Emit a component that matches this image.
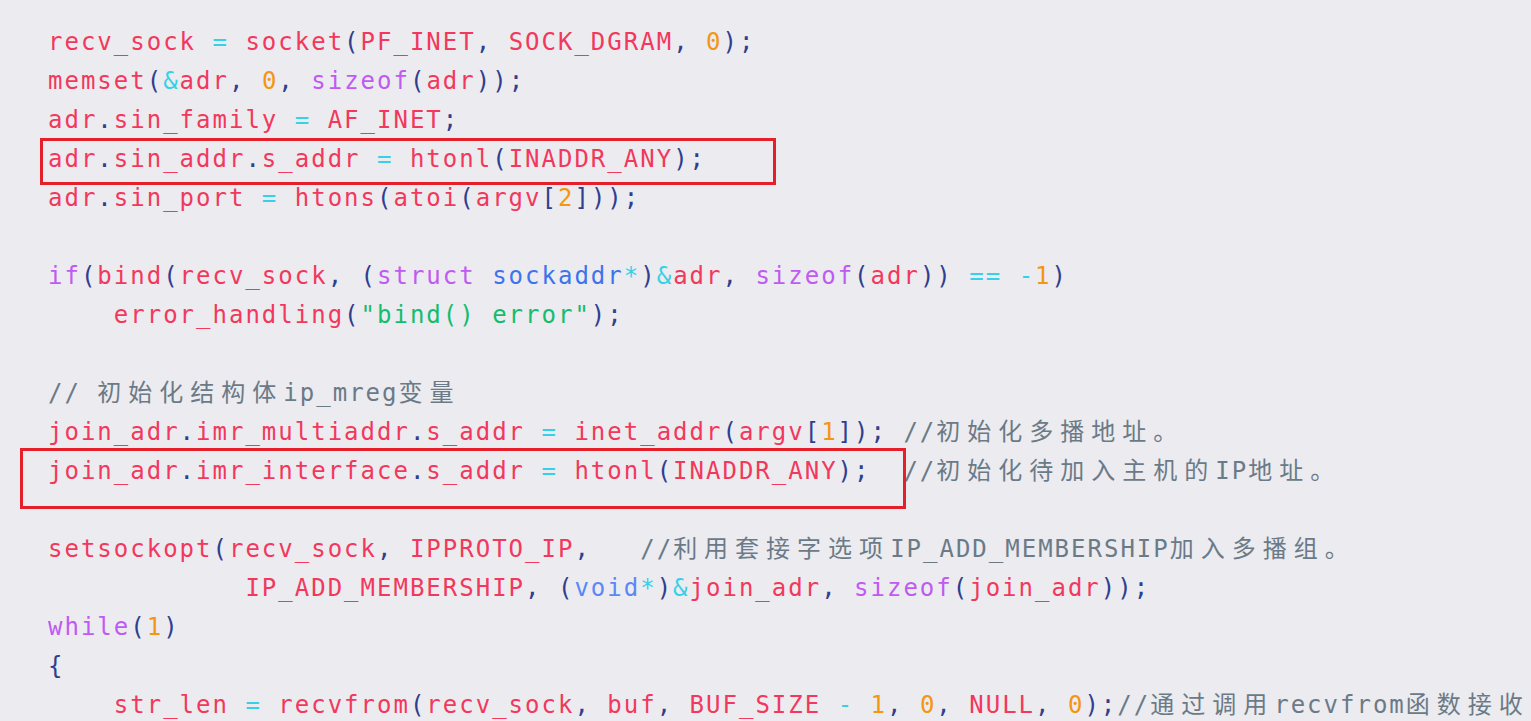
import React from "react";

const code = [
    "recv_sock = socket(PF_INET, SOCK_DGRAM, 0);",
    "memset(&adr, 0, sizeof(adr));",
    "adr.sin_family = AF_INET;",
    "adr.sin_addr.s_addr = htonl(INADDR_ANY);",
    "adr.sin_port = htons(atoi(argv[2]));",
    "",
    "if(bind(recv_sock, (struct sockaddr*)&adr, sizeof(adr)) == -1)",
    "    error_handling(\"bind() error\");",
    "",
    "// 初始化结构体ip_mreg变量",
    "join_adr.imr_multiaddr.s_addr = inet_addr(argv[1]); //初始化多播地址。",
    "join_adr.imr_interface.s_addr = htonl(INADDR_ANY);  //初始化待加入主机的IP地址。",
    "",
    "setsockopt(recv_sock, IPPROTO_IP,   //利用套接字选项IP_ADD_MEMBERSHIP加入多播组。",
    "            IP_ADD_MEMBERSHIP, (void*)&join_adr, sizeof(join_adr));",
    "while(1)",
    "{",
    "    str_len = recvfrom(recv_sock, buf, BUF_SIZE - 1, 0, NULL, 0);//通过调用recvfrom函数接收",
];

const keywords = ["sizeof", "if", "while", "struct"];
const types = { sockaddr: "text-[#3d74ee]", void: "text-[#5b87f7]" };

function Comment({ text }) {
    // CJK runs are wider in the shot, so give them more tracking
    return text.split(/([\u3000-\u303f\u4e00-\u9fff\uff00-\uffef]+)/).map((part, i) =>
        /[\u3000-\u303f\u4e00-\u9fff\uff00-\uffef]/.test(part) ? (
            <span key={i} className="tracking-[7px]">{part}</span>
        ) : (
            <span key={i}>{part}</span>
        )
    );
}

function Line({ src }) {
    const out = [];
    const re = /(\/\/.*$)|("[^"]*")|([A-Za-z_]\w*)|(\d+)|(\s+)|(.)/g;
    let m;
    let i = 0;
    while ((m = re.exec(src)) !== null) {
        const key = i++;
        if (m[1]) {
            out.push(<span key={key} className="text-[#6b7a87]"><Comment text={m[1]} /></span>);
        } else if (m[2]) {
            out.push(<span key={key} className="text-[#12bd6e]">{m[2]}</span>);
        } else if (m[3]) {
            let cls = "text-[#f2385c]";
            if (keywords.includes(m[3])) cls = "text-[#bf5af2]";
            else if (types[m[3]]) cls = types[m[3]];
            out.push(<span key={key} className={cls}>{m[3]}</span>);
        } else if (m[4]) {
            out.push(<span key={key} className="text-[#f39612]">{m[4]}</span>);
        } else if (m[5]) {
            out.push(<span key={key}>{m[5]}</span>);
        } else {
            const cls = "=&*-".includes(m[6]) ? "text-[#36d1e8]" : "text-[#2f3e8f]";
            out.push(<span key={key} className={cls}>{m[6]}</span>);
        }
    }
    return <div className="h-[39px] leading-[39px] whitespace-pre">{out.length ? out : " "}</div>;
}

export default function App() {
    return (
        <div className="relative w-full h-[721px] overflow-hidden bg-[#ecebef]">
            <div className="pt-[23px] pl-[48px] text-[24px] tracking-[2px] font-['DejaVu_Sans_Mono','Noto_Sans_CJK_SC',monospace]">
                {code.map((src, index) => (
                    <Line key={index} src={src} />
                ))}
            </div>
            <div className="absolute left-[40px] top-[138px] w-[736px] h-[47px] border-[3px] border-[#e5202b]"></div>
            <div className="absolute left-[20px] top-[448px] w-[886px] h-[61px] border-[3px] border-[#e5202b]"></div>
        </div>
    );
}
